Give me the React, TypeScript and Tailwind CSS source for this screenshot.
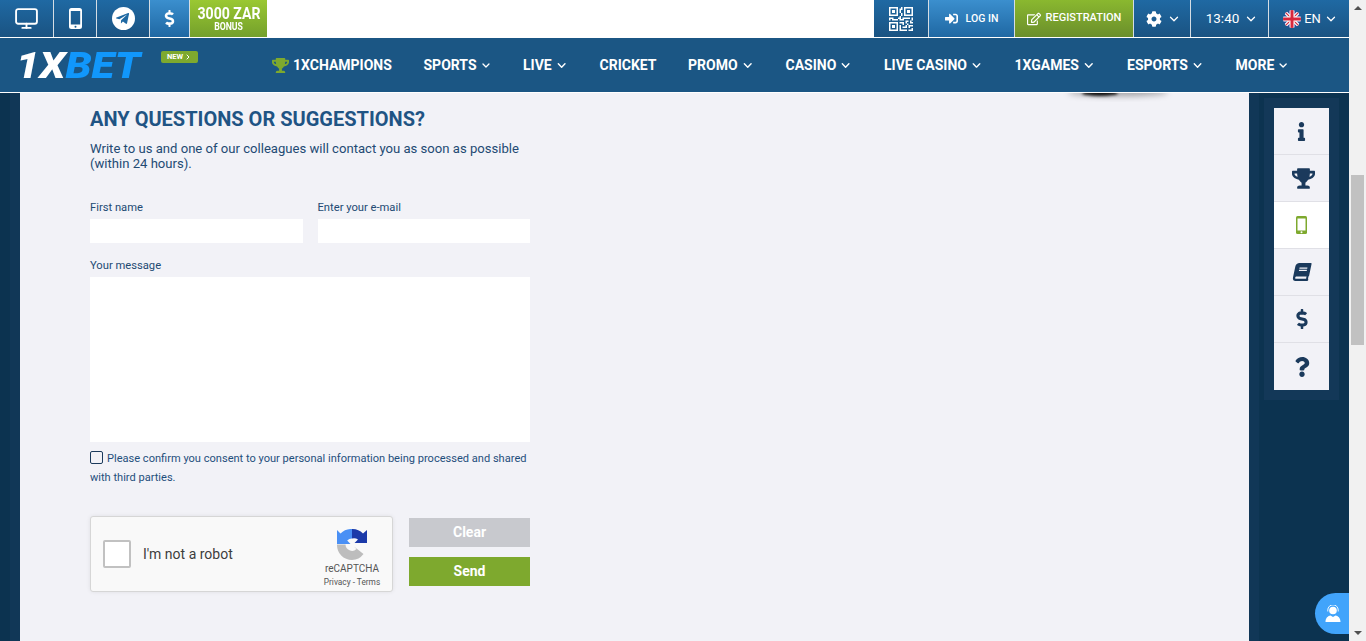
import { ChevronDown, ChevronRight, Monitor } from 'lucide-react';
import { BsQrCode } from 'react-icons/bs';
import {
  FaBook,
  FaCog,
  FaDollarSign,
  FaInfo,
  FaQuestion,
  FaRegEdit,
  FaSignInAlt,
  FaTelegramPlane,
  FaTrophy,
} from 'react-icons/fa';

const BLUE_CELL = 'bg-gradient-to-b from-[#1f69a3] to-[#1a5382]';
const LIGHT_CELL = 'bg-gradient-to-b from-[#3b8fce] to-[#1f68a3]';
const GREEN_CELL = 'bg-gradient-to-b from-[#8ab82f] to-[#6b8f2b]';

const NAV_ITEMS = [
  { label: 'SPORTS', width: 'w-[68px]', chevron: true },
  { label: 'LIVE', width: 'w-[45px]', chevron: true },
  { label: 'CRICKET', width: 'w-[57px]', chevron: false },
  { label: 'PROMO', width: 'w-[66px]', chevron: true },
  { label: 'CASINO', width: 'w-[67px]', chevron: true },
  { label: 'LIVE CASINO', width: 'w-[99px]', chevron: true },
  { label: '1XGAMES', width: 'w-[81px]', chevron: true },
  { label: 'ESPORTS', width: 'w-[77px]', chevron: true },
  { label: 'MORE', width: 'w-[54px]', chevron: true },
];

function UkFlag() {
  return (
    <svg viewBox="0 0 18 18" className="w-[18px] h-[18px] rounded-full">
      <rect width="18" height="18" fill="#2b4c9b" />
      <path d="M0 0L18 18M18 0L0 18" stroke="#fff" strokeWidth="3.4" />
      <path d="M0 0L18 18M18 0L0 18" stroke="#d8283c" strokeWidth="1.2" />
      <path d="M9 0V18M0 9H18" stroke="#fff" strokeWidth="5" />
      <path d="M9 0V18M0 9H18" stroke="#d8283c" strokeWidth="3" />
    </svg>
  );
}

function PhoneIcon() {
  return (
    <svg viewBox="0 0 13 21" className="w-[13px] h-[21px]" fill="#fff">
      <path d="M2.5 0h8A2.5 2.5 0 0 1 13 2.5v16a2.5 2.5 0 0 1-2.5 2.5h-8A2.5 2.5 0 0 1 0 18.500v-16A2.500 2.500 0 0 1 2.500 0zM1.800 3v13.500h9.400V3z" fillRule="evenodd" />
      <circle cx="6.500" cy="18.700" r="1" fill="#1d5f94" />
    </svg>
  );
}

function GreenPhone() {
  return (
    <svg viewBox="0 0 11 18" className="w-[11px] h-[18px]">
      <rect width="11" height="18" rx="1.500" fill="#7ea92e" />
      <rect x="1.500" y="2.500" width="8" height="12" fill="#fff" />
      <circle cx="5.500" cy="16.200" r="1" fill="#fff" />
    </svg>
  );
}

function RecaptchaLogo() {
  return (
    <svg viewBox="0 0 31 31" className="w-[31px] h-[31px]">
      <path d="M0 15V1l3.500 3.500A15 15 0 0 1 15 0v9.500a6.500 6.500 0 0 0-4.800 2L13.500 15z" fill="#4a90f5" />
      <path d="M15 0a15 15 0 0 1 11 4.500L30 1v13H17.500l3.500-3.500a7 7 0 0 0-6-1z" fill="#1c3aa9" />
      <path d="M0 15.500h8.500a6.500 6.500 0 0 0 11 4.500l-2.500-2.500 9.500 7.500A15 15 0 0 1 15 31 15 15 0 0 1 0 15.500z" fill="#bdbdbd" />
    </svg>
  );
}

function AgentIcon() {
  return (
    <svg viewBox="0 0 16 17" className="w-[16px] h-[17px]" fill="#fff">
      <circle cx="8" cy="5.500" r="3.800" />
      <path d="M2.800 6.500V5a5.200 5.200 0 0 1 10.400 0v1.500" fill="none" stroke="#fff" strokeWidth="0.900" />
      <path d="M0.500 17c0-4 2.500-6 5-6.400L8 12l2.500-1.400c2.500.4 5 2.400 5 6.400z" />
    </svg>
  );
}

function TopCell({ className, children }: { className: string; children: React.ReactNode }) {
  return <div className={`flex items-center justify-center h-full ${className}`}>{children}</div>;
}

function TopBar() {
  return (
    <div className="flex h-[37px] bg-white text-white">
      <div className="flex gap-px h-full bg-[#d5dde4]">
        <TopCell className={`w-[53px] ${BLUE_CELL}`}>
          <Monitor size={25} strokeWidth={1.8} />
        </TopCell>
        <TopCell className={`w-[42px] ${BLUE_CELL}`}>
          <PhoneIcon />
        </TopCell>
        <TopCell className={`w-[52px] ${BLUE_CELL}`}>
          <div className="flex items-center justify-center w-[23px] h-[23px] rounded-full bg-white">
            <FaTelegramPlane size={15} className="text-[#1f69a3] mr-[2px]" />
          </div>
        </TopCell>
        <TopCell className={`w-[39px] ${LIGHT_CELL}`}>
          <FaDollarSign size={17} />
        </TopCell>
        <TopCell className="w-[77px] flex-col bg-gradient-to-b from-[#9ac832] to-[#74a02b] font-bold">
          <span className="text-[17px] leading-[17px] scale-x-[0.83] whitespace-nowrap">3000 ZAR</span>
          <span className="text-[10px] leading-[10px] scale-x-[0.87]">BONUS</span>
        </TopCell>
      </div>
      <div className="flex-1" />
      <div className="flex gap-px h-full bg-[#d5dde4]">
        <TopCell className={`w-[54px] ${BLUE_CELL}`}>
          <BsQrCode size={24} />
        </TopCell>
        <TopCell className={`w-[85px] gap-[8px] text-[10.5px] font-medium ${LIGHT_CELL}`}>
          <FaSignInAlt size={13} />
          <span>LOG IN</span>
        </TopCell>
        <TopCell className={`w-[118px] gap-[5px] text-[11px] font-medium ${GREEN_CELL}`}>
          <FaRegEdit size={14} />
          <span>REGISTRATION</span>
        </TopCell>
        <TopCell className={`w-[56px] gap-[5px] pl-[3px] ${BLUE_CELL}`}>
          <FaCog size={16} />
          <ChevronDown size={14} strokeWidth={2.2} />
        </TopCell>
        <TopCell className={`w-[77px] gap-[5px] pl-[5px] text-[13.5px] ${BLUE_CELL}`}>
          <span>13:40</span>
          <ChevronDown size={14} strokeWidth={2.2} />
        </TopCell>
        <TopCell className={`w-[80px] gap-[3px] pl-[3px] text-[13px] ${BLUE_CELL}`}>
          <UkFlag />
          <span>EN</span>
          <ChevronDown size={14} strokeWidth={2.2} />
        </TopCell>
      </div>
    </div>
  );
}

function NavBar() {
  return (
    <div className="flex items-center h-[54px] mt-px bg-[#1b5684] text-white">
      <div className="w-[161px] pl-[16px]">
        <div className="text-[37px] leading-none font-black italic whitespace-nowrap mt-[1px] scale-x-[1.13] origin-left">
          <span>1X</span>
          <span className="text-[#1197fb]">BET</span>
        </div>
      </div>
      <div className="flex items-center gap-[1px] h-[12px] w-[37px] -mt-[17px] rounded-[2px] bg-[#7ea92e] text-[7.5px] font-bold pl-[6px]">
        NEW
        <ChevronRight size={8} strokeWidth={3} />
      </div>
      <div className="flex items-center ml-[74px] gap-[31.5px] text-[14px] font-bold">
        <div className="flex items-center gap-[4px] w-[120px]">
          <FaTrophy size={17} className="text-[#7ea92e]" />
          <span>1XCHAMPIONS</span>
        </div>
        {NAV_ITEMS.map((item) => (
          <div key={item.label} className={`flex items-center gap-[3px] whitespace-nowrap ${item.width}`}>
            <span>{item.label}</span>
            {item.chevron && <ChevronDown size={15} strokeWidth={2.6} />}
          </div>
        ))}
      </div>
    </div>
  );
}

function ContactForm() {
  return (
    <div className="w-[440px] ml-[70px] pt-[14px] text-[#234a73]">
      <h2 className="text-[20px] leading-[24px] font-bold text-[#1f5484]">ANY QUESTIONS OR SUGGESTIONS?</h2>
      <p className="mt-[10px] text-[13.1px] leading-[15px]">
        Write to us and one of our colleagues will contact you as soon as possible (within 24 hours).
      </p>
      <div className="grid grid-cols-2 gap-x-[15px] mt-[30px]">
        <div>
          <label className="block text-[11.2px] leading-[13px] mb-[5px]">First name</label>
          <input className="block w-full h-[24px] bg-white" />
        </div>
        <div>
          <label className="block text-[11.2px] leading-[13px] mb-[5px]">Enter your e-mail</label>
          <input className="block w-full h-[24px] bg-white" />
        </div>
      </div>
      <label className="block mt-[16px] text-[11.2px] leading-[13px] mb-[5px]">Your message</label>
      <textarea className="block w-full h-[165px] bg-white resize-none" />
      <div className="mt-[7px] text-[11.07px] leading-[19px] text-[#1f4f7c]">
        <span className="inline-block align-[-2px] w-[13px] h-[13px] mr-[4px] rounded-[2px] border border-[#1b3a5c]" />
        Please confirm you consent to your personal information being processed and shared with third parties.
      </div>
      <div className="flex justify-between mt-[29px]">
        <div className="flex items-center w-[303px] h-[76px] rounded-[3px] border border-[#d6d6d6] bg-[#f9f9f9] shadow-[0_0_4px_rgba(0,0,0,0.08)] pl-[12px]">
          <div className="w-[28px] h-[28px] rounded-[2px] border-2 border-[#c1c1c1] bg-white" />
          <span className="ml-[12px] text-[14px] text-[#3d3d3d]">I'm not a robot</span>
          <div className="flex flex-col items-center ml-auto mr-[10px] w-[60px] pt-[9px] text-[#555] whitespace-nowrap">
            <RecaptchaLogo />
            <span className="text-[10px] leading-[12px] mt-[3px]">reCAPTCHA</span>
            <span className="text-[8.3px] leading-[12px] mt-[1px]">Privacy - Terms</span>
          </div>
        </div>
        <div className="flex flex-col w-[121px] gap-[10px] pt-[2px] text-white text-[14px] font-bold">
          <button className="h-[29px] bg-[#c8c9ce]">Clear</button>
          <button className="h-[29px] bg-[#7ea92e]">Send</button>
        </div>
      </div>
    </div>
  );
}

function SideMenu() {
  const rowClass = 'flex items-center justify-center h-[47px] text-[#1b3a5c] border-b border-[#e0e0e6]';
  return (
    <div className="w-[75px] ml-[5px] mt-[5px] h-[302px] p-[10px] bg-[#133858]">
      <div className="bg-[#f2f2f7]">
        <div className={rowClass}>
          <FaInfo size={19} />
        </div>
        <div className={rowClass}>
          <FaTrophy size={23} className="ml-[4px]" />
        </div>
        <div className={`${rowClass} bg-white`}>
          <GreenPhone />
        </div>
        <div className={rowClass}>
          <FaBook size={18} className="-skew-x-12" />
        </div>
        <div className={rowClass}>
          <FaDollarSign size={20} />
        </div>
        <div className="flex items-center justify-center h-[47px] text-[#1b3a5c]">
          <FaQuestion size={20} />
        </div>
      </div>
    </div>
  );
}

function Scrollbar() {
  return (
    <div className="flex flex-col items-center w-[17px] h-full bg-[#f1f1f1]">
      <div className="mt-[6px] w-0 h-0 border-x-[4px] border-x-transparent border-b-[4px] border-b-[#505050]" />
      <div className="mt-[165px] w-[13px] h-[170px] bg-[#c1c1c1]" />
      <div className="mt-auto mb-[6px] w-0 h-0 border-x-[4px] border-x-transparent border-t-[4px] border-t-[#505050]" />
    </div>
  );
}

export default function App() {
  return (
    <div className="relative flex w-full h-[641px] overflow-hidden bg-white [font-family:Roboto,sans-serif]">
      <div className="flex flex-col flex-1 min-w-0">
        <TopBar />
        <NavBar />
        <div className="flex flex-1 mt-px">
          <div className="flex w-[20px]">
            <div className="w-[10px] bg-[#0c3350]" />
            <div className="w-[10px] bg-[#113757]" />
          </div>
          <div className="flex-1 bg-[#f2f2f7]">
            <ContactForm />
          </div>
          <div className="flex w-[100px] bg-[#0c3350]">
            <div className="w-[10px] bg-[#113757]" />
            <SideMenu />
          </div>
        </div>
      </div>
      <Scrollbar />
      {/* smudge left under the nav by the banner image */}
      <div className="absolute left-[1060px] top-[93px] w-[115px] h-[9px] overflow-hidden">
        <div className="absolute left-[8px] -top-[5px] w-[100px] h-[8px] rounded-[50%] bg-black/35 blur-[3px]" />
        <div className="absolute left-[22px] -top-[3px] w-[36px] h-[6px] rounded-[50%] bg-black/90 blur-[1.5px]" />
      </div>
      <div className="absolute left-[1315px] top-[593px] flex items-center justify-center w-[34px] h-[41px] rounded-l-full bg-[#41a4fb] pl-[2px]">
        <AgentIcon />
      </div>
    </div>
  );
}
